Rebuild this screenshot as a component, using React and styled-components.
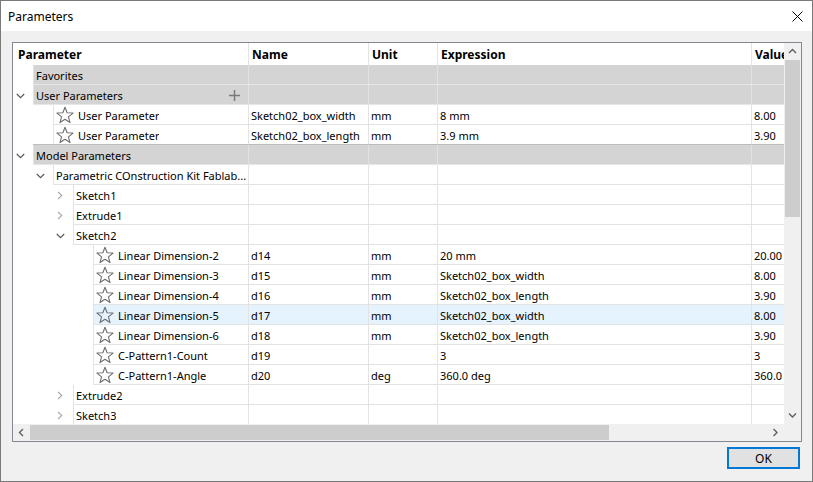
import React from "react";
import styled, { createGlobalStyle } from "styled-components";

const GlobalStyle = createGlobalStyle`
  * { box-sizing: border-box; }
  html, body { margin: 0; padding: 0; background: #f0f0f0; }
  body { font-family: "Noto Sans", "Open Sans", sans-serif; font-size: 11px; color: #000; }
`;

const COLS = { param: 235, name: 120, unit: 69, expr: 314, value: 80 };
const LINE = "#e3e3e3";

const Window = styled.div`
  width: 813px;
  height: 482px;
  border: 1px solid #7a7a7a;
  background: #f0f0f0;
  display: flex;
  flex-direction: column;
`;

const TitleBar = styled.div`
  height: 30px;
  background: #fff;
  display: flex;
  align-items: center;
  justify-content: space-between;
  padding: 0 9px 0 7px;
  flex: none;
`;

const Title = styled.div`
  font-size: 12px;
  color: #000;
`;

const CloseIcon = styled.svg`
  width: 11px;
  height: 11px;
  display: block;
`;

const Body = styled.div`
  flex: 1;
  padding: 11px 10px 0 11px;
  display: flex;
  flex-direction: column;
`;

const Panel = styled.div`
  width: 790px;
  height: 400px;
  border: 1px solid #828790;
  background: #fff;
  display: grid;
  grid-template-columns: 1fr 17px;
  grid-template-rows: 1fr 17px;
`;

const Viewport = styled.div`
  overflow: hidden;
  position: relative;
`;

const Table = styled.div`
  width: ${COLS.param + COLS.name + COLS.unit + COLS.expr + COLS.value}px;
`;

const HeaderRow = styled.div`
  display: flex;
  height: 22px;
  background: #fff;
`;

const HeaderCell = styled.div`
  width: ${(p) => p.$w}px;
  flex: none;
  display: flex;
  align-items: center;
  padding: 1px 0 0 ${(p) => (p.$first ? 5 : 3)}px;
  font-weight: 700;
  font-size: 12px;
  border-left: ${(p) => (p.$first ? "none" : `1px solid ${LINE}`)};
  white-space: nowrap;
  overflow: hidden;
`;

const Row = styled.div`
  display: flex;
  height: 20px;
`;

const Indent = styled.div`
  width: ${(p) => p.$w}px;
  flex: none;
  display: flex;
  justify-content: flex-end;
  background: #fff;
`;

const ChevronSlot = styled.div`
  width: 20px;
  display: flex;
  align-items: center;
  justify-content: center;
  padding: 1px 6px 0 0;
`;

const RowBody = styled.div`
  flex: 1;
  display: flex;
  background: ${(p) => (p.$group ? "#d4d4d4" : p.$selected ? "#e5f3ff" : "#fff")};
  border-bottom: 1px solid ${(p) => (p.$group ? "#e6e6e6" : LINE)};
  border-top: ${(p) => (p.$groupTop ? "1px solid #bdbdbd" : "none")};
  margin-top: ${(p) => (p.$groupTop ? "-1px" : "0")};
  height: ${(p) => (p.$groupTop ? "21px" : "20px")};
`;

const Cell = styled.div`
  width: ${(p) => p.$w}px;
  flex: none;
  display: flex;
  align-items: center;
  padding: 1px 0 0 2px;
  border-left: 1px solid ${(p) => (p.$group ? "#e2e2e2" : LINE)};
  white-space: nowrap;
  overflow: hidden;
`;

const Label = styled.span`
  overflow: hidden;
  white-space: nowrap;
`;

const StarIcon = styled.svg`
  width: 18px;
  height: 18px;
  flex: none;
  margin: -1px 4px 0 0;
  display: block;
`;

const PlusIcon = styled.svg`
  width: 11px;
  height: 11px;
  margin-left: auto;
  margin-right: 8px;
  flex: none;
  display: block;
`;

const VScroll = styled.div`
  background: #f0f0f0;
  display: flex;
  flex-direction: column;
`;

const HScroll = styled.div`
  background: #f0f0f0;
  display: flex;
`;

const Corner = styled.div`
  background: #f0f0f0;
`;

const ArrowBox = styled.div`
  width: 17px;
  height: 17px;
  flex: none;
  display: flex;
  align-items: center;
  justify-content: center;
`;

const VThumb = styled.div`
  height: 157px;
  margin: 0 1px;
  background: #cdcdcd;
  flex: none;
`;

const HThumb = styled.div`
  width: 579px;
  margin: 1px 0;
  background: #cdcdcd;
  flex: none;
`;

const Spacer = styled.div`
  flex: 1;
`;

const Footer = styled.div`
  display: flex;
  justify-content: flex-end;
  padding: 5px 2px 0 0;
`;

const OkButton = styled.button`
  width: 73px;
  height: 22px;
  border: 1px solid #0078d7;
  box-shadow: inset 0 0 0 1px #0078d7;
  background: #e1e1e1;
  font-family: "Noto Sans", "Open Sans", sans-serif;
  font-size: 12px;
  color: #000;
  padding: 0;
`;

const Chevron = ({ dir }) =>
  dir === "down" ? (
    <svg width="9" height="6" viewBox="0 0 9 6">
      <path d="M0.8 1 L4.5 4.7 L8.2 1" fill="none" stroke="#5a5a5a" strokeWidth="1.2" />
    </svg>
  ) : (
    <svg width="6" height="9" viewBox="0 0 6 9">
      <path d="M1 0.8 L4.7 4.5 L1 8.2" fill="none" stroke="#a8a8a8" strokeWidth="1.2" />
    </svg>
  );

const Star = () => (
  <StarIcon viewBox="0 0 18 18">
    <polygon
      points="9,1.2 11.12,6.79 17.08,7.07 12.42,10.81 14,16.58 9,13.3 4,16.58 5.58,10.81 0.92,7.07 6.88,6.79"
      fill="none"
      stroke="#6f6f6f"
      strokeWidth="1.1"
      strokeLinejoin="round"
    />
  </StarIcon>
);

const ScrollArrow = ({ dir }) => {
  const paths = {
    up: "M1 5 L4.5 1.5 L8 5",
    down: "M1 1.5 L4.5 5 L8 1.5",
    left: "M5 1 L1.5 4.5 L5 8",
    right: "M1.5 1 L5 4.5 L1.5 8",
  };
  const horiz = dir === "left" || dir === "right";
  return (
    <ArrowBox>
      <svg width={horiz ? 7 : 9} height={horiz ? 9 : 7} viewBox={horiz ? "0 0 7 9" : "0 0 9 7"}>
        <path d={paths[dir]} fill="none" stroke="#606060" strokeWidth="1.4" />
      </svg>
    </ArrowBox>
  );
};

const rows = [
  { level: 0, group: true, label: "Favorites" },
  { level: 0, group: true, label: "User Parameters", chevron: "down", plus: true },
  { level: 1, star: true, label: "User Parameter", name: "Sketch02_box_width", unit: "mm", expr: "8 mm", value: "8.00" },
  { level: 1, star: true, label: "User Parameter", name: "Sketch02_box_length", unit: "mm", expr: "3.9 mm", value: "3.90" },
  { level: 0, group: true, groupTop: true, label: "Model Parameters", chevron: "down" },
  { level: 1, label: "Parametric COnstruction Kit Fablab...", chevron: "down" },
  { level: 2, label: "Sketch1", chevron: "right" },
  { level: 2, label: "Extrude1", chevron: "right" },
  { level: 2, label: "Sketch2", chevron: "down" },
  { level: 3, star: true, label: "Linear Dimension-2", name: "d14", unit: "mm", expr: "20 mm", value: "20.00" },
  { level: 3, star: true, label: "Linear Dimension-3", name: "d15", unit: "mm", expr: "Sketch02_box_width", value: "8.00" },
  { level: 3, star: true, label: "Linear Dimension-4", name: "d16", unit: "mm", expr: "Sketch02_box_length", value: "3.90" },
  { level: 3, star: true, selected: true, label: "Linear Dimension-5", name: "d17", unit: "mm", expr: "Sketch02_box_width", value: "8.00" },
  { level: 3, star: true, label: "Linear Dimension-6", name: "d18", unit: "mm", expr: "Sketch02_box_length", value: "3.90" },
  { level: 3, star: true, label: "C-Pattern1-Count", name: "d19", unit: "", expr: "3", value: "3" },
  { level: 3, star: true, label: "C-Pattern1-Angle", name: "d20", unit: "deg", expr: "360.0 deg", value: "360.0" },
  { level: 2, label: "Extrude2", chevron: "right" },
  { level: 2, label: "Sketch3", chevron: "right" },
];

export default function App() {
  return (
    <>
      <GlobalStyle />
      <Window>
        <TitleBar>
          <Title>Parameters</Title>
          <CloseIcon viewBox="0 0 11 11">
            <path d="M0.5 0.5 L10.5 10.5 M10.5 0.5 L0.5 10.5" stroke="#000" strokeWidth="1" fill="none" />
          </CloseIcon>
        </TitleBar>
        <Body>
          <Panel>
            <Viewport>
              <Table>
                <HeaderRow>
                  <HeaderCell $w={COLS.param} $first>Parameter</HeaderCell>
                  <HeaderCell $w={COLS.name}>Name</HeaderCell>
                  <HeaderCell $w={COLS.unit}>Unit</HeaderCell>
                  <HeaderCell $w={COLS.expr}>Expression</HeaderCell>
                  <HeaderCell $w={COLS.value}>Value</HeaderCell>
                </HeaderRow>
                {rows.map((r, i) => {
                  const indent = 20 * (r.level + 1);
                  return (
                    <Row key={i}>
                      <Indent $w={indent}>
                        <ChevronSlot>{r.chevron && <Chevron dir={r.chevron} />}</ChevronSlot>
                      </Indent>
                      <RowBody $group={r.group} $groupTop={r.groupTop} $selected={r.selected}>
                        <Cell $w={COLS.param - indent} $group={r.group}>
                          {r.star && <Star />}
                          <Label>{r.label}</Label>
                          {r.plus && (
                            <PlusIcon viewBox="0 0 11 11">
                              <path d="M5.5 0 V11 M0 5.5 H11" stroke="#7a7a7a" strokeWidth="1.5" fill="none" />
                            </PlusIcon>
                          )}
                        </Cell>
                        <Cell $w={COLS.name} $group={r.group}>{r.name}</Cell>
                        <Cell $w={COLS.unit} $group={r.group}>{r.unit}</Cell>
                        <Cell $w={COLS.expr} $group={r.group}>{r.expr}</Cell>
                        <Cell $w={COLS.value} $group={r.group}>{r.value}</Cell>
                      </RowBody>
                    </Row>
                  );
                })}
              </Table>
            </Viewport>
            <VScroll>
              <ScrollArrow dir="up" />
              <VThumb />
              <Spacer />
              <ScrollArrow dir="down" />
            </VScroll>
            <HScroll>
              <ScrollArrow dir="left" />
              <HThumb />
              <Spacer />
              <ScrollArrow dir="right" />
            </HScroll>
            <Corner />
          </Panel>
          <Footer>
            <OkButton>OK</OkButton>
          </Footer>
        </Body>
      </Window>
    </>
  );
}
